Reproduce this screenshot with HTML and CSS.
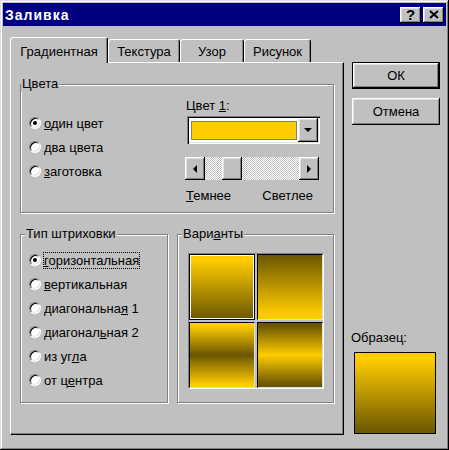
FILE: index.html
```html
<!DOCTYPE html>
<html>
<head>
  <meta charset="utf-8">
  <title>Заливка</title>
  <link rel="stylesheet" href="styles.css">
</head>
<body>
  <div class="window">
    <div class="titlebar">
      <span class="title">Заливка</span>
      <div class="title-buttons">
        <button class="raised title-btn help">?</button>
        <button class="raised title-btn close">
          <svg width="10" height="9" viewBox="0 0 10 9"><path d="M1 1L9 8M9 1L1 8" stroke="#000" stroke-width="2"/></svg>
        </button>
      </div>
    </div>

    <div class="content">
      <div class="tab-area">
        <div class="tabstrip">
          <div class="tab active">Градиентная</div>
          <div class="tab tab-texture">Текстура</div>
          <div class="tab tab-pattern">Узор</div>
          <div class="tab tab-picture">Рисунок</div>
        </div>

        <div class="panel">
          <div class="group group-colors">
            <span class="legend legend-tight">Цвета</span>
            <div class="colors-body">
              <div class="radio-list colors-list">
                <div class="radio-row"><span class="radio checked"></span><span class="radio-label"><u>о</u>дин цвет</span></div>
                <div class="radio-row"><span class="radio"></span><span class="radio-label"><u>д</u>ва цвета</span></div>
                <div class="radio-row"><span class="radio"></span><span class="radio-label"><u>з</u>аготовка</span></div>
              </div>
              <div class="color-pick">
                <div class="field-label">Цвет <u>1</u>:</div>
                <div class="combo">
                  <div class="swatch"></div>
                  <div class="raised combo-arrow"><span class="arrow-down"></span></div>
                </div>
                <div class="scrollbar">
                  <div class="raised scroll-btn"><span class="arrow-left"></span></div>
                  <div class="track"><div class="raised thumb"></div></div>
                  <div class="raised scroll-btn"><span class="arrow-right"></span></div>
                </div>
                <div class="scale-labels"><span><u>Т</u>емнее</span><span>Светлее</span></div>
              </div>
            </div>
          </div>

          <div class="lower">
            <div class="group group-shading">
              <span class="legend">Тип штриховки</span>
              <div class="radio-list shading-list">
                <div class="radio-row"><span class="radio checked"></span><span class="radio-label focused"><u>г</u>оризонтальная</span></div>
                <div class="radio-row"><span class="radio"></span><span class="radio-label"><u>в</u>ертикальная</span></div>
                <div class="radio-row"><span class="radio"></span><span class="radio-label">диагональна<u>я</u> 1</span></div>
                <div class="radio-row"><span class="radio"></span><span class="radio-label">диагонал<u>ь</u>ная 2</span></div>
                <div class="radio-row"><span class="radio"></span><span class="radio-label">из уг<u>л</u>а</span></div>
                <div class="radio-row"><span class="radio"></span><span class="radio-label">от ц<u>е</u>нтра</span></div>
              </div>
            </div>
            <div class="group group-variants">
              <span class="legend">Вари<u>а</u>нты</span>
              <div class="variants">
                <div class="variant selected v-down"></div>
                <div class="variant v-up"></div>
                <div class="variant v-mid-dark"></div>
                <div class="variant v-mid-light"></div>
              </div>
            </div>
          </div>
        </div>
      </div>

      <div class="side">
        <button class="raised push default">ОК</button>
        <button class="raised push cancel">Отмена</button>
        <div class="sample-label">Образец:</div>
        <div class="sample"></div>
      </div>
    </div>
  </div>
</body>
</html>
```

FILE: styles.css
```css
body {
  margin: 0;
  background: #c0c0c0;
  font-family: 'Liberation Sans', Arial, sans-serif;
  font-size: 13px;
  color: #000;
}
.window {
  width: 449px;
  height: 450px;
  box-sizing: border-box;
  padding: 3px;
  background: #c0c0c0;
  box-shadow: inset -1px -1px #000, inset 1px 1px #dfdfdf, inset -2px -2px #808080, inset 2px 2px #fff;
}
.raised {
  background: #c0c0c0;
  box-shadow: inset -1px -1px #000, inset 1px 1px #fff, inset -2px -2px #808080, inset 2px 2px #dfdfdf;
}

/* title bar */
.titlebar {
  height: 23px;
  background: #000080;
  display: flex;
  align-items: center;
  justify-content: space-between;
  padding: 0 2px;
}
.title {
  color: #fff;
  font-weight: bold;
  font-size: 14px;
  letter-spacing: 1px;
}
.title-buttons {
  display: flex;
  gap: 2px;
}
.title-btn {
  width: 21px;
  height: 16px;
  border: none;
  padding: 0;
  display: flex;
  align-items: center;
  justify-content: center;
  font-family: 'Liberation Sans', Arial, sans-serif;
  font-weight: bold;
  font-size: 15px;
  line-height: 16px;
}
.title-btn svg {
  display: block;
}

/* layout */
.content {
  display: flex;
  padding: 11px 0 0 7px;
}
.tab-area {
  width: 334px;
}
.side {
  width: 88px;
  margin-left: 8px;
  padding-top: 25px;
  display: flex;
  flex-direction: column;
}

/* tabs */
.tabstrip {
  display: flex;
  align-items: flex-end;
  height: 25px;
}
.tab {
  box-sizing: border-box;
  height: 23px;
  padding-top: 4px;
  line-height: 16px;
  text-align: center;
  border-top: 1px solid #fff;
  border-left: 1px solid #fff;
  border-right: 1px solid #000;
  border-radius: 3px 3px 0 0;
  box-shadow: inset -1px 0 #808080;
  background: #c0c0c0;
}
.tab.active {
  width: 98px;
  height: 26px;
  padding-top: 6px;
  margin-bottom: -1px;
  position: relative;
  z-index: 1;
}
.tab-texture { width: 72px; }
.tab-pattern { width: 64px; }
.tab-picture { width: 67px; }

.panel {
  box-sizing: border-box;
  width: 334px;
  height: 373px;
  border-top: 1px solid #fff;
  border-left: 1px solid #fff;
  border-right: 1px solid #000;
  border-bottom: 1px solid #000;
  box-shadow: inset -1px -1px #808080;
  padding: 21px 0 0 9px;
}

/* group boxes */
.group {
  box-sizing: border-box;
  border: 1px solid #808080;
  box-shadow: inset 1px 1px #fff, 1px 1px #fff;
  display: flex;
  flex-direction: column;
  align-items: flex-start;
}
.legend {
  margin: -9px 0 0 4px;
  padding: 0 1px;
  line-height: 16px;
  background: #c0c0c0;
}
.legend-tight {
  margin-left: 0;
}
.group-colors {
  width: 314px;
  height: 129px;
}
.lower {
  display: flex;
  gap: 9px;
  margin-top: 21px;
}
.group-shading {
  width: 148px;
  height: 169px;
}
.group-variants {
  width: 157px;
  height: 169px;
}

/* radio buttons */
.radio-list {
  padding-left: 8px;
}
.colors-list {
  width: 157px;
  padding-top: 19px;
}
.shading-list {
  padding-top: 6px;
}
.radio-row {
  display: flex;
  align-items: center;
  height: 24px;
}
.radio {
  flex: none;
  width: 12px;
  height: 12px;
  box-sizing: border-box;
  border-radius: 50%;
  background: #fff;
  border: 1px solid;
  border-color: #808080 #fff #fff #808080;
  box-shadow: inset 1px 1px #000, inset -1px -1px #dfdfdf;
  display: flex;
  align-items: center;
  justify-content: center;
}
.radio.checked::after {
  content: "";
  width: 4px;
  height: 4px;
  border-radius: 50%;
  background: #000;
}
.radio-label {
  margin-left: 2px;
  border: 1px solid transparent;
  line-height: 15px;
  white-space: nowrap;
}
.radio-label.focused {
  border: 1px dotted #000;
}

/* colour picker */
.colors-body {
  display: flex;
}
.color-pick {
  display: flex;
  flex-direction: column;
}
.field-label {
  margin-top: 6px;
  line-height: 16px;
}
.combo {
  box-sizing: border-box;
  width: 133px;
  height: 28px;
  margin: 2px 0 0 1px;
  padding: 2px;
  display: flex;
  background: #fff;
  box-shadow: inset 1px 1px #808080, inset 2px 2px #000, inset -1px -1px #fff, inset -2px -2px #dfdfdf;
}
.swatch {
  flex: 1;
  margin: 3px 1px 2px 2px;
  border: 1px solid #808080;
  background: #ffcc00;
}
.combo-arrow {
  width: 20px;
  display: flex;
  align-items: center;
  justify-content: center;
}
.arrow-down {
  border-left: 4px solid transparent;
  border-right: 4px solid transparent;
  border-top: 4px solid #000;
}
.scrollbar {
  display: flex;
  width: 134px;
  height: 23px;
  margin: 13px 0 0 -1px;
}
.scroll-btn {
  width: 20px;
  display: flex;
  align-items: center;
  justify-content: center;
}
.arrow-left {
  border-top: 4px solid transparent;
  border-bottom: 4px solid transparent;
  border-right: 4px solid #000;
}
.arrow-right {
  border-top: 4px solid transparent;
  border-bottom: 4px solid transparent;
  border-left: 4px solid #000;
}
.track {
  flex: 1;
  display: flex;
  background: repeating-conic-gradient(#fff 0 25%, #c0c0c0 0 50%) 0 0 / 2px 2px;
}
.thumb {
  width: 20px;
  margin-left: 17px;
}
.scale-labels {
  display: flex;
  justify-content: space-between;
  width: 127px;
  margin-top: 8px;
  line-height: 16px;
}

/* variants */
.variants {
  display: grid;
  grid-template-columns: 66px 66px;
  grid-auto-rows: 66px;
  gap: 2px;
  margin: 11px 0 0 10px;
  border: 1px solid;
  border-color: #808080 #fff #fff #808080;
}
.variant {
  border: 1px solid;
  border-color: #000 #dfdfdf #dfdfdf #000;
}
.variant.selected {
  border-color: #000;
  box-shadow: inset 0 0 0 1px #fff;
}
.v-down { background: linear-gradient(#ffcc00 8%, #6b5600); }
.v-up { background: linear-gradient(#6b5600, #ffcc00 92%); }
.v-mid-dark { background: linear-gradient(#ffcc00 4%, #6b5600 50%, #ffcc00 96%); }
.v-mid-light { background: linear-gradient(#6b5600 4%, #ffcc00 50%, #6b5600 96%); }

/* side buttons */
.push {
  box-sizing: border-box;
  width: 88px;
  height: 27px;
  border: none;
  padding: 0;
  font-family: 'Liberation Sans', Arial, sans-serif;
  font-size: 13px;
  color: #000;
}
.push.default {
  border: 1px solid #000;
}
.push.cancel {
  margin-top: 9px;
}
.sample-label {
  margin: 205px 0 0 -1px;
  line-height: 16px;
}
.sample {
  width: 82px;
  height: 82px;
  box-sizing: border-box;
  margin: 6px 0 0 2px;
  border: 1px solid #000;
  background: linear-gradient(#ffcc00 8%, #6b5600);
}
```
